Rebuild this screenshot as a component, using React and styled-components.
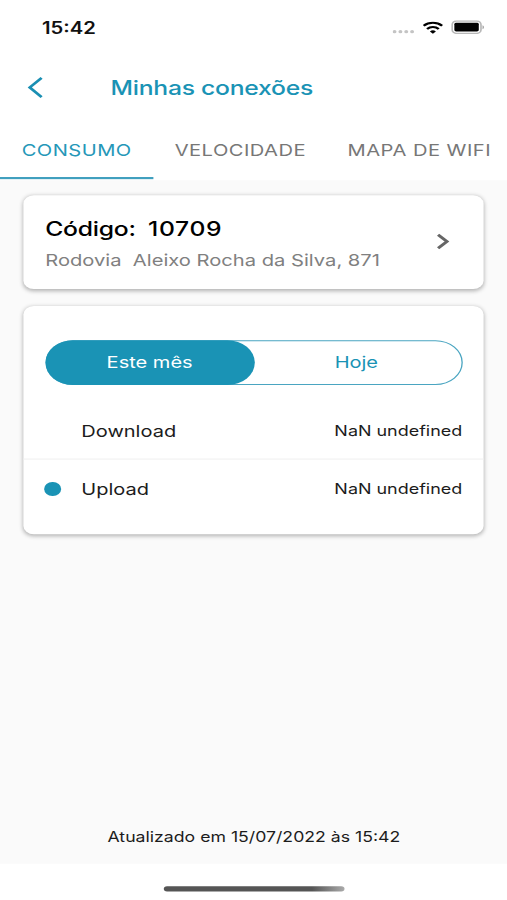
import React from 'react';
import styled, { createGlobalStyle } from 'styled-components';

const GlobalStyle = createGlobalStyle`
  * {
    box-sizing: border-box;
  }

  body {
    margin: 0;
    background: #fff;
    font-family: Inter, "Liberation Sans", sans-serif;
  }
`;

const Viewport = styled.div`
  width: 100vw;
  height: 100vh;
  overflow: hidden;
`;

// 390x844 phone screen, stretched over the 507x900 window
const Screen = styled.div`
  width: 390px;
  height: 844px;
  display: flex;
  flex-direction: column;
  background: #fff;
  transform: scale(1.3, 1.0664);
  transform-origin: 0 0;
`;

const Text = styled.span`
  font-size: ${(props) => props.$size}px;
  font-weight: ${(props) => props.$weight || 400};
  letter-spacing: ${(props) => props.$spacing || 0}px;
  color: ${(props) => props.$color || '#1c1c1c'};
  line-height: 1.2;
  white-space: pre;
`;

const StatusBar = styled.div`
  height: 51px;
  display: flex;
  align-items: center;
  justify-content: space-between;
  padding: 0 17.4px 0 32.3px;
`;

const Clock = styled(Text)`
  padding-top: 3px;
`;

const StatusIcons = styled.div`
  display: flex;
  align-items: center;
  gap: 6px;
`;

const Header = styled.div`
  height: 62px;
  display: flex;
  align-items: center;
  padding-left: 21px;
  gap: 52px;
`;

const Title = styled(Text)`
  padding-top: 2px;
`;

const Tabs = styled.div`
  height: 55px;
  display: flex;
  margin-bottom: 1px;
`;

const Tab = styled.div`
  flex: none;
  width: ${(props) => props.$width}px;
  display: flex;
  align-items: center;
  padding: 4px 0 0 16.7px;
  border-bottom: 2px solid ${(props) => (props.$active ? '#3f9fbe' : 'transparent')};
`;

const Content = styled.div`
  flex: 1;
  display: flex;
  flex-direction: column;
  align-items: stretch;
  padding: 13.8px 17.7px 0 18.3px;
  background: #fafafa;
`;

const Card = styled.div`
  background: #fff;
  border-radius: 8px;
  box-shadow: 0 1px 4px rgba(0, 0, 0, .3);
`;

const CodeCard = styled(Card)`
  height: 88px;
  display: flex;
  align-items: center;
  justify-content: space-between;
  padding: 0 26px 0 16.5px;
`;

const Lines = styled.div`
  display: flex;
  flex-direction: column;
  gap: 8px;
  padding-top: 4px;
`;

const Code = styled.div`
  display: flex;
  gap: 9.5px;
`;

const UsageCard = styled(Card)`
  height: 213.2px;
  margin-top: 16.7px;
  padding-top: 32px;
`;

const Toggle = styled.div`
  height: 41.5px;
  display: flex;
  margin: 0 16.3px;
  border: 1px solid #4aa5c1;
  border-radius: 21px;
`;

const Option = styled.div`
  width: 161px;
  margin: -1px;
  padding-top: 1px;
  display: flex;
  align-items: center;
  justify-content: center;
  border-radius: 21px;
  background: ${(props) => (props.$active ? '#1a93b5' : 'transparent')};
`;

const Row = styled.div`
  height: ${(props) => props.$height}px;
  display: flex;
  align-items: center;
  padding: ${(props) => props.$top || 0}px 16.8px 0 16.2px;
  border-bottom: ${(props) => (props.$last ? 'none' : '1px solid #f0f0f0')};
`;

const Dot = styled.div`
  width: 12.5px;
  height: 12.5px;
  margin-right: 15.6px;
  border-radius: 50%;
  background: ${(props) => (props.$visible ? '#1a93b5' : 'transparent')};
`;

const Label = styled(Text)`
  padding-top: 2px;
`;

const Value = styled(Text)`
  margin-left: auto;
`;

const Updated = styled.div`
  margin-top: auto;
  height: 36px;
  text-align: center;
`;

const HomeArea = styled.div`
  height: 34.5px;
  padding-top: 21.5px;
`;

const HomeIndicator = styled.div`
  width: 139px;
  height: 5px;
  margin: 0 auto;
  border-radius: 3px;
  background: linear-gradient(90deg, #555 0, #555 82%, #aaa 100%);
`;

const Signal = () => (
  <svg width="17" height="12" viewBox="0 0 17 12">
    {[1.5, 6, 10.5, 15].map((cx) => (
      <circle key={cx} cx={cx} cy="9.7" r="1.5" fill="#c4c4c4" />
    ))}
  </svg>
);

const Wifi = () => (
  <svg width="16" height="12" viewBox="0 0 16 12" fill="none" stroke="#000" strokeWidth="2">
    <path d="M.9 4.2a10.3 10.3 0 0 1 14.2 0" />
    <path d="M3.5 7.1a6.5 6.5 0 0 1 9 0" />
    <path d="M8 11.7 5.7 9.5a3.3 3.3 0 0 1 4.6 0z" fill="#000" stroke="none" />
  </svg>
);

const Battery = () => (
  <svg width="26" height="13" viewBox="0 0 26 13">
    <rect x=".8" y=".7" width="22.2" height="11.6" rx="3.4" fill="none" stroke="#b8b8b8" strokeWidth="1.3" />
    <rect x="2.5" y="2.4" width="18.8" height="8.2" rx="1.4" fill="#000" />
    <path d="M24.2 4.6v3.8c1.4-.7 1.4-3.1 0-3.8z" fill="#999" />
  </svg>
);

const BackIcon = () => (
  <svg width="12" height="20" viewBox="0 0 12 20" fill="none" stroke="#1a8fb3" strokeWidth="2.3">
    <path d="M11 1 1.9 10l9.1 9" />
  </svg>
);

const ChevronIcon = () => (
  <svg width="10" height="15" viewBox="0 0 10 15" fill="none" stroke="#666" strokeWidth="2.5">
    <path d="M1 1.2 7.8 7.5 1 13.8" />
  </svg>
);

const tabs = [
  { label: 'CONSUMO', width: 117.7, active: true },
  { label: 'VELOCIDADE', width: 133 },
  { label: 'MAPA DE WIFI', width: 139 },
];

const App = () => (
  <Viewport>
    <GlobalStyle />
    <Screen>
      <StatusBar>
        <Clock $size={15.6} $weight={600} $color="#111">15:42</Clock>
        <StatusIcons>
          <Signal />
          <Wifi />
          <Battery />
        </StatusIcons>
      </StatusBar>
      <Header>
        <BackIcon />
        <Title $size={19} $weight={500} $spacing={-0.2} $color="#1a93b5">Minhas conexões</Title>
      </Header>
      <Tabs>
        {tabs.map((tab) => (
          <Tab key={tab.label} $width={tab.width} $active={tab.active}>
            <Text $size={15.5} $spacing={0.35} $color={tab.active ? '#2597b8' : '#777'}>
              {tab.label}
            </Text>
          </Tab>
        ))}
      </Tabs>
      <Content>
        <CodeCard>
          <Lines>
            <Code>
              <Text $size={19} $weight={500} $spacing={-0.2} $color="#000">Código:</Text>
              <Text $size={19} $weight={500} $spacing={0.5} $color="#000">10709</Text>
            </Code>
            <Text $size={15.5} $color="#808080">{'Rodovia  Aleixo Rocha da Silva, 871'}</Text>
          </Lines>
          <ChevronIcon />
        </CodeCard>
        <UsageCard>
          <Toggle>
            <Option $active>
              <Text $size={15.4} $color="#fff">Este mês</Text>
            </Option>
            <Option>
              <Text $size={15.4} $color="#1a93b5">Hoje</Text>
            </Option>
          </Toggle>
          <Row $height={70} $top={18}>
            <Dot />
            <Label $size={15.4}>Download</Label>
            <Value $size={13.8}>NaN undefined</Value>
          </Row>
          <Row $height={54} $top={1} $last>
            <Dot $visible />
            <Label $size={15.4}>Upload</Label>
            <Value $size={13.8}>NaN undefined</Value>
          </Row>
        </UsageCard>
        <Updated>
          <Text $size={13.6}>Atualizado em 15/07/2022 às 15:42</Text>
        </Updated>
      </Content>
      <HomeArea>
        <HomeIndicator />
      </HomeArea>
    </Screen>
  </Viewport>
);

export default App;
